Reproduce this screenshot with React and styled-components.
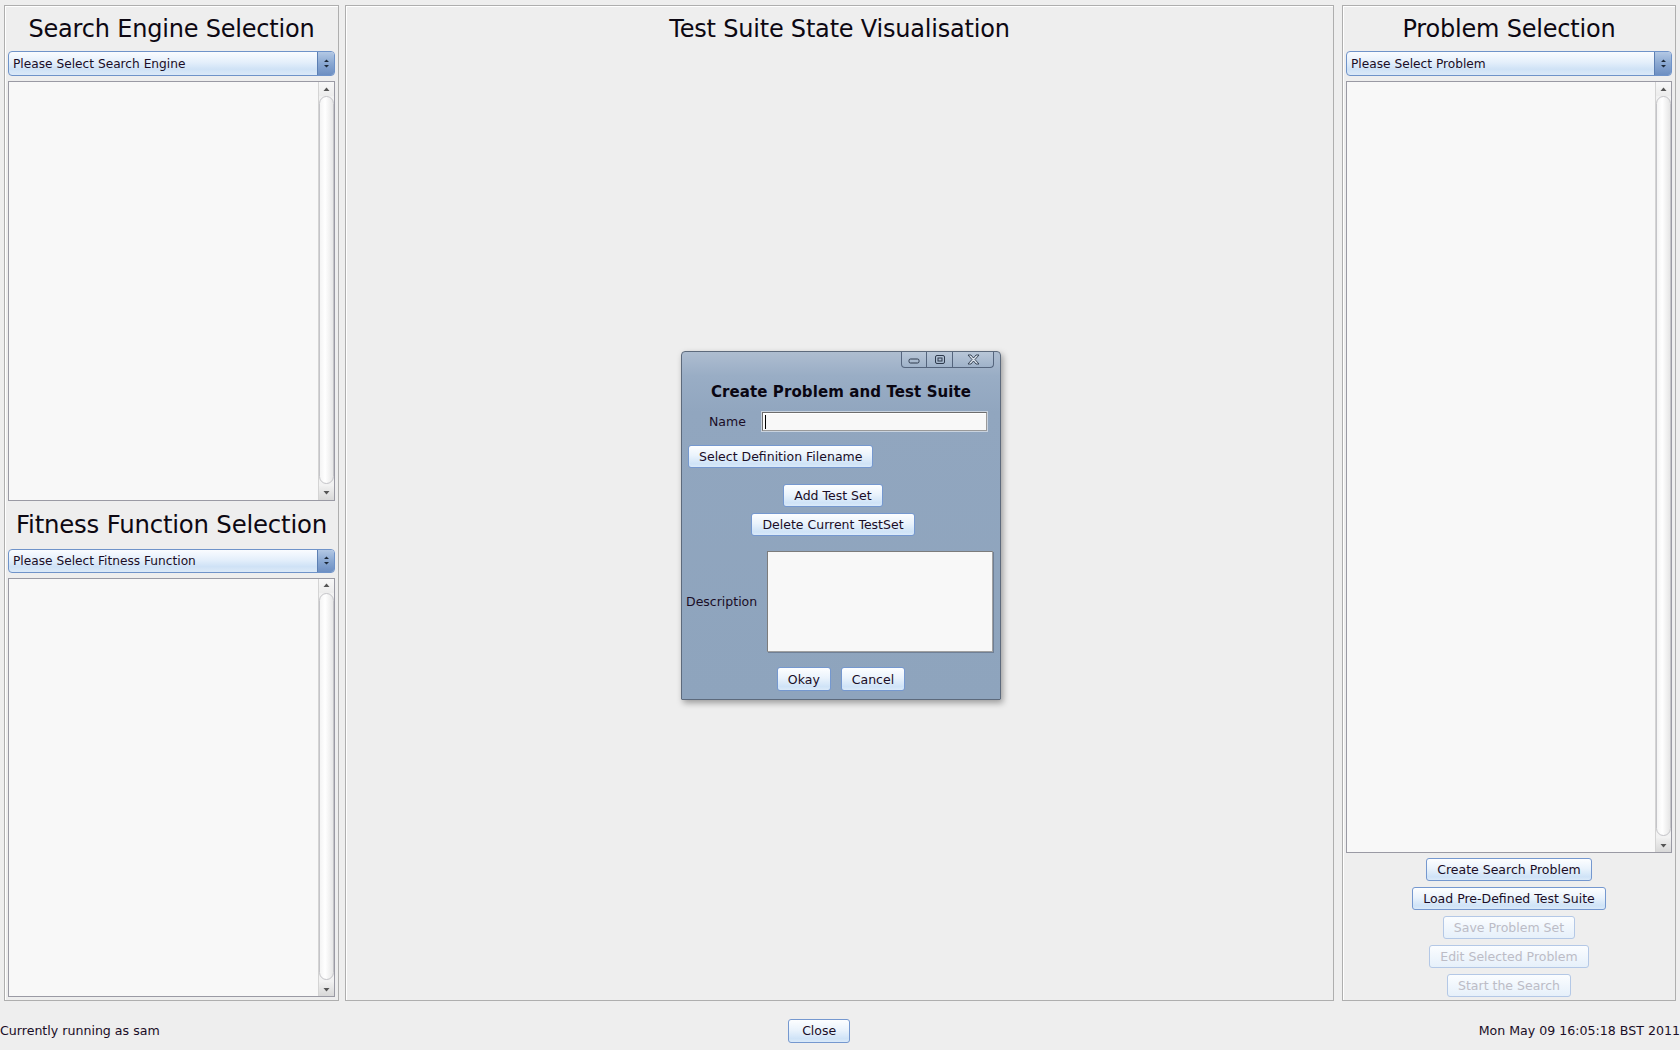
import React from "react";
import styled, { createGlobalStyle } from "styled-components";

const Global = createGlobalStyle`
  html, body { margin: 0; padding: 0; background: #eeeeee; }
  body { font-family: "DejaVu Sans", "Liberation Sans", sans-serif; color: #161020; }
  * { box-sizing: border-box; }
`;

const Page = styled.div`
  position: relative;
  width: 1680px;
  height: 1050px;
  background: #eeeeee;
  display: flex;
  flex-direction: column;
  overflow: hidden;
`;

const Main = styled.div`
  display: flex;
  height: 1001px;
  padding: 5px 4px 0 4px;
`;

const Panel = styled.section`
  display: flex;
  flex-direction: column;
  width: ${(p) => p.$w || "auto"};
  flex: ${(p) => (p.$grow ? "1" : "none")};
  margin: ${(p) => p.$m || "0"};
  border: 1px solid #aeaeae;
  box-shadow: inset 1px 1px 0 #ffffff;
  padding: 1px 3px 3px 3px;
`;

const Title = styled.h2`
  margin: 0;
  height: ${(p) => p.$h || 44}px;
  display: flex;
  align-items: center;
  justify-content: center;
  font-size: ${(p) => p.$fs || 24}px;
  font-weight: normal;
  color: #0d0812;
  letter-spacing: -0.2px;
  white-space: nowrap;
`;

const Combo = styled.div`
  display: flex;
  height: ${(p) => p.$h || 25}px;
  border: 1px solid #6f93c9;
  border-radius: 4px;
  overflow: hidden;
  background: linear-gradient(#fafcff 0%, #e4effb 45%, #cfe2f6 75%, #dbe9f8 100%);
`;

const ComboText = styled.span`
  flex: 1;
  display: flex;
  align-items: center;
  padding-left: 4px;
  font-size: 12.2px;
  color: #1a0d26;
`;

const ComboArrow = styled.span`
  width: 17px;
  display: flex;
  align-items: center;
  justify-content: center;
  border-left: 1px solid #5c7fb3;
  background: linear-gradient(#b3c8e4 0%, #8aa8d2 50%, #6d8fc2 100%);
`;

const ListBox = styled.div`
  flex: 1;
  display: flex;
  margin-top: 5px;
  border: 1px solid #9a9aa4;
  background: #f8f8f8;
  min-height: 0;
`;

const ListBody = styled.div`
  flex: 1;
`;

const ScrollBar = styled.div`
  width: 16px;
  display: flex;
  flex-direction: column;
  border-left: 1px solid #d4d4d4;
  background: #f2f2f2;
`;

const ScrollBtn = styled.div`
  height: 14px;
  display: flex;
  align-items: center;
  justify-content: center;
  background: ${(p) => (p.$down ? "linear-gradient(#f0f0f0, #d8d8d8)" : "linear-gradient(#f8f8f8, #ececec)")};
`;

const Thumb = styled.div`
  flex: 1;
  margin: 0 0 2px 0;
  border: 1px solid #c4c4c8;
  border-radius: 8px;
  background: linear-gradient(90deg, #f4f4f4 0%, #ffffff 40%, #e6e6e6 100%);
`;

const ButtonStack = styled.div`
  display: flex;
  flex-direction: column;
  align-items: center;
  gap: 6px;
  padding-top: 5px;
`;

const Btn = styled.button`
  height: ${(p) => p.$h || 23}px;
  padding: 0 ${(p) => p.$px || 10}px;
  font-family: "DejaVu Sans", "Liberation Sans", sans-serif;
  font-size: 12.5px;
  color: ${(p) => (p.disabled ? "#bcbcc6" : "#1a0d26")};
  border: 1px solid ${(p) => (p.disabled ? "#b4c8e6" : "#7598cf")};
  border-radius: 3px;
  background: ${(p) =>
    p.disabled
      ? "linear-gradient(#fbfdff 0%, #eef5fc 60%, #e6f0fa 100%)"
      : "linear-gradient(#fdfeff 0%, #eaf3fc 45%, #cfe3f7 85%, #dbeaf9 100%)"};
  white-space: nowrap;
  margin: ${(p) => p.$m || "0"};
  cursor: default;
`;

const StatusBar = styled.footer`
  flex: 1;
  display: flex;
  align-items: center;
  padding-top: 10px;
  font-size: 12.6px;
  color: #1a0d26;
`;

const StatusText = styled.span`
  white-space: nowrap;
`;

const StatusCenter = styled.div`
  flex: 1;
  display: flex;
  justify-content: center;
`;

/* Dialog */
const Dialog = styled.div`
  position: absolute;
  left: 681px;
  top: 351px;
  width: 320px;
  height: 349px;
  border: 1px solid #5d6a7c;
  border-radius: 4px 4px 1px 1px;
  background: linear-gradient(#aebdd0 0px, #99adc5 24px, #91a6bf 60px, #8ea4bd 100%);
  box-shadow: 2px 3px 6px rgba(0, 0, 0, 0.35);
  display: flex;
  flex-direction: column;
`;

const TitleBar = styled.div`
  height: 17px;
  display: flex;
  justify-content: flex-end;
  padding-right: 6px;
`;

const WinButtons = styled.div`
  display: flex;
  height: 16px;
  border: 1px solid #55657d;
  border-top: none;
  border-radius: 0 0 4px 4px;
  overflow: hidden;
  background: linear-gradient(#b9c7d8, #9fb2c9);
`;

const WinBtn = styled.span`
  width: ${(p) => p.$w}px;
  display: flex;
  align-items: center;
  justify-content: center;
  border-left: ${(p) => (p.$first ? "none" : "1px solid #55657d")};
`;

const DialogTitle = styled.div`
  text-align: center;
  font-size: 15px;
  font-weight: bold;
  letter-spacing: 0.1px;
  color: #0a0612;
  margin-top: 13px;
  height: 20px;
  line-height: 20px;
`;

const FieldRow = styled.div`
  display: flex;
  align-items: center;
  margin-top: ${(p) => p.$mt || 0}px;
  padding-left: ${(p) => p.$pl || 0}px;
`;

const Label = styled.span`
  font-size: 12.5px;
  color: #1a0d26;
  width: ${(p) => p.$w}px;
  white-space: nowrap;
`;

const TextField = styled.div`
  width: 225px;
  height: 19px;
  border: 1px solid #6d6d6d;
  border-right-color: #9a9a9a;
  border-bottom-color: #9a9a9a;
  background: #f8f8f8;
  box-shadow: inset 1px 1px 0 #ffffff, 0 0 0 1px #c9d3df;
  display: flex;
  align-items: center;
  padding-left: 2px;
`;

const Caret = styled.span`
  width: 1px;
  height: 14px;
  background: #000;
`;

const CenterCol = styled.div`
  display: flex;
  flex-direction: column;
  align-items: center;
  gap: 6px;
  padding-right: 16px;
  margin-top: 16px;
`;

const TextArea = styled.div`
  width: 226px;
  height: 101px;
  border: 1px solid #7c7c7c;
  border-right-color: #a0a0a0;
  border-bottom-color: #a0a0a0;
  background: #f8f8f8;
  box-shadow: 1px 1px 0 #6f7f95;
`;

const DialogButtons = styled.div`
  display: flex;
  justify-content: center;
  gap: 10px;
  margin-top: 15px;
`;

const ComboArrowIcon = () => (
  <svg width="7" height="11" viewBox="0 0 7 11">
    <path d="M1 4 L3.5 1.5 L6 4 Z M1 7 L3.5 9.5 L6 7 Z" fill="#1c2838" />
  </svg>
);

const Arrow = ({ down }) => (
  <svg width="7" height="5" viewBox="0 0 7 5">
    <path d={down ? "M0.5 1 L6.5 1 L3.5 4.5 Z" : "M0.5 4 L6.5 4 L3.5 0.5 Z"} fill="#555" />
  </svg>
);

const SelectBox = ({ label, h }) => (
  <Combo $h={h}>
    <ComboText>{label}</ComboText>
    <ComboArrow>
      <ComboArrowIcon />
    </ComboArrow>
  </Combo>
);

const List = () => (
  <ListBox>
    <ListBody />
    <ScrollBar>
      <ScrollBtn>
        <Arrow />
      </ScrollBtn>
      <Thumb />
      <ScrollBtn $down>
        <Arrow down />
      </ScrollBtn>
    </ScrollBar>
  </ListBox>
);

export default function App() {
  return (
    <Page>
      <Global />
      <Main>
        <Panel $w="335px">
          <Title>Search Engine Selection</Title>
          <SelectBox label="Please Select Search Engine" />
          <List />
          <Title $h={48} $fs={24.4}>Fitness Function Selection</Title>
          <SelectBox label="Please Select Fitness Function" h={24} />
          <List />
        </Panel>
        <Panel $grow $m="0 8px 0 6px">
          <Title>Test Suite State Visualisation</Title>
        </Panel>
        <Panel $w="334px">
          <Title>Problem Selection</Title>
          <SelectBox label="Please Select Problem" />
          <List />
          <ButtonStack>
            <Btn>Create Search Problem</Btn>
            <Btn>Load Pre-Defined Test Suite</Btn>
            <Btn disabled>Save Problem Set</Btn>
            <Btn disabled>Edit Selected Problem</Btn>
            <Btn disabled>Start the Search</Btn>
          </ButtonStack>
        </Panel>
      </Main>
      <StatusBar>
        <StatusText>Currently running as sam</StatusText>
        <StatusCenter>
          <Btn $h={24} $px={13}>Close</Btn>
        </StatusCenter>
        <StatusText>Mon May 09 16:05:18 BST 2011</StatusText>
      </StatusBar>

      <Dialog>
        <TitleBar>
          <WinButtons>
            <WinBtn $w={24} $first>
              <svg width="12" height="8" viewBox="0 0 12 8">
                <rect x="1" y="3" width="10" height="4" rx="1.5" fill="none" stroke="#2e3a4c" strokeWidth="1" />
              </svg>
            </WinBtn>
            <WinBtn $w={26}>
              <svg width="12" height="11" viewBox="0 0 12 11">
                <rect x="1.5" y="1.5" width="9" height="8" rx="1.5" fill="none" stroke="#2e3a4c" strokeWidth="1" />
                <rect x="4" y="4" width="4" height="3" fill="none" stroke="#2e3a4c" strokeWidth="1" />
              </svg>
            </WinBtn>
            <WinBtn $w={41}>
              <svg width="13" height="11" viewBox="0 0 13 11">
                <path
                  d="M1 1 L4 1 L6.5 4 L9 1 L12 1 L8 5.5 L12 10 L9 10 L6.5 7 L4 10 L1 10 L5 5.5 Z"
                  fill="#d9e1ea"
                  stroke="#2e3a4c"
                  strokeWidth="0.9"
                  strokeLinejoin="round"
                />
              </svg>
            </WinBtn>
          </WinButtons>
        </TitleBar>
        <DialogTitle>Create Problem and Test Suite</DialogTitle>
        <FieldRow $mt={10} $pl={27}>
          <Label $w={53}>Name</Label>
          <TextField>
            <Caret />
          </TextField>
        </FieldRow>
        <FieldRow $mt={14} $pl={6}>
          <Btn>Select Definition Filename</Btn>
        </FieldRow>
        <CenterCol>
          <Btn>Add Test Set</Btn>
          <Btn>Delete Current TestSet</Btn>
        </CenterCol>
        <FieldRow $mt={15} $pl={4}>
          <Label $w={81}>Description</Label>
          <TextArea />
        </FieldRow>
        <DialogButtons>
          <Btn $h={24}>Okay</Btn>
          <Btn $h={24}>Cancel</Btn>
        </DialogButtons>
      </Dialog>
    </Page>
  );
}
